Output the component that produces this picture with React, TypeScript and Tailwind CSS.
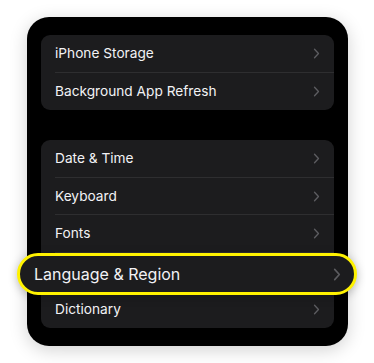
function Chevron({ className = "" }: { className?: string }) {
  return (
    <svg viewBox="0 0 8 14" className={className} fill="none">
      <path d="M1.5 1.5 6.5 7l-5 5.5" stroke="#5c5c60" strokeWidth="1.7" strokeLinecap="round" strokeLinejoin="round" />
    </svg>
  );
}

function Row({ label, last = false }: { label: string; last?: boolean }) {
  return (
    <div className="flex h-[37.6px] items-stretch pl-[14px]">
      <div
        className={
          "flex flex-1 items-center justify-between pr-[14px] " + (last ? "" : "border-b border-[#2e2e30]")
        }
      >
        <span className="text-[13.7px] text-[#f2f2f5]">{label}</span>
        <Chevron className="h-[11px] w-[7px]" />
      </div>
    </div>
  );
}

function Group({ items }: { items: string[] }) {
  return (
    <div className="overflow-hidden rounded-[9px] bg-[#1c1c1e]">
      {items.map((it, i) => (
        <Row key={i} label={it} last={i === items.length - 1} />
      ))}
    </div>
  );
}

export default function App() {
  return (
    <div
      className="relative h-[363px] w-[374px] bg-white pl-[27px] pt-[17px]"
      style={{ fontFamily: "Inter, 'Noto Sans', sans-serif" }}
    >
      <div className="flex h-[329px] w-[321px] flex-col gap-[30px] rounded-[22px] bg-black px-[14px] pt-[18px] shadow-[0_4px_18px_rgba(0,0,0,0.18)]">
        <Group items={["iPhone Storage", "Background App Refresh"]} />
        {/* the 4th row is covered by the magnified pill below */}
        <Group items={["Date & Time", "Keyboard", "Fonts", "", "Dictionary"]} />
      </div>

      <div className="absolute left-[17px] top-[253px] flex h-[42px] w-[340px] items-center justify-between rounded-full border-[3px] border-[#fff200] bg-[#1c1c1e] pl-[14px] pr-[13px] shadow-[0_2px_10px_rgba(0,0,0,0.25)]">
        <span className="text-[16px] text-[#f2f2f5]">Language &amp; Region</span>
        <Chevron className="h-[13px] w-[8px]" />
      </div>
    </div>
  );
}
